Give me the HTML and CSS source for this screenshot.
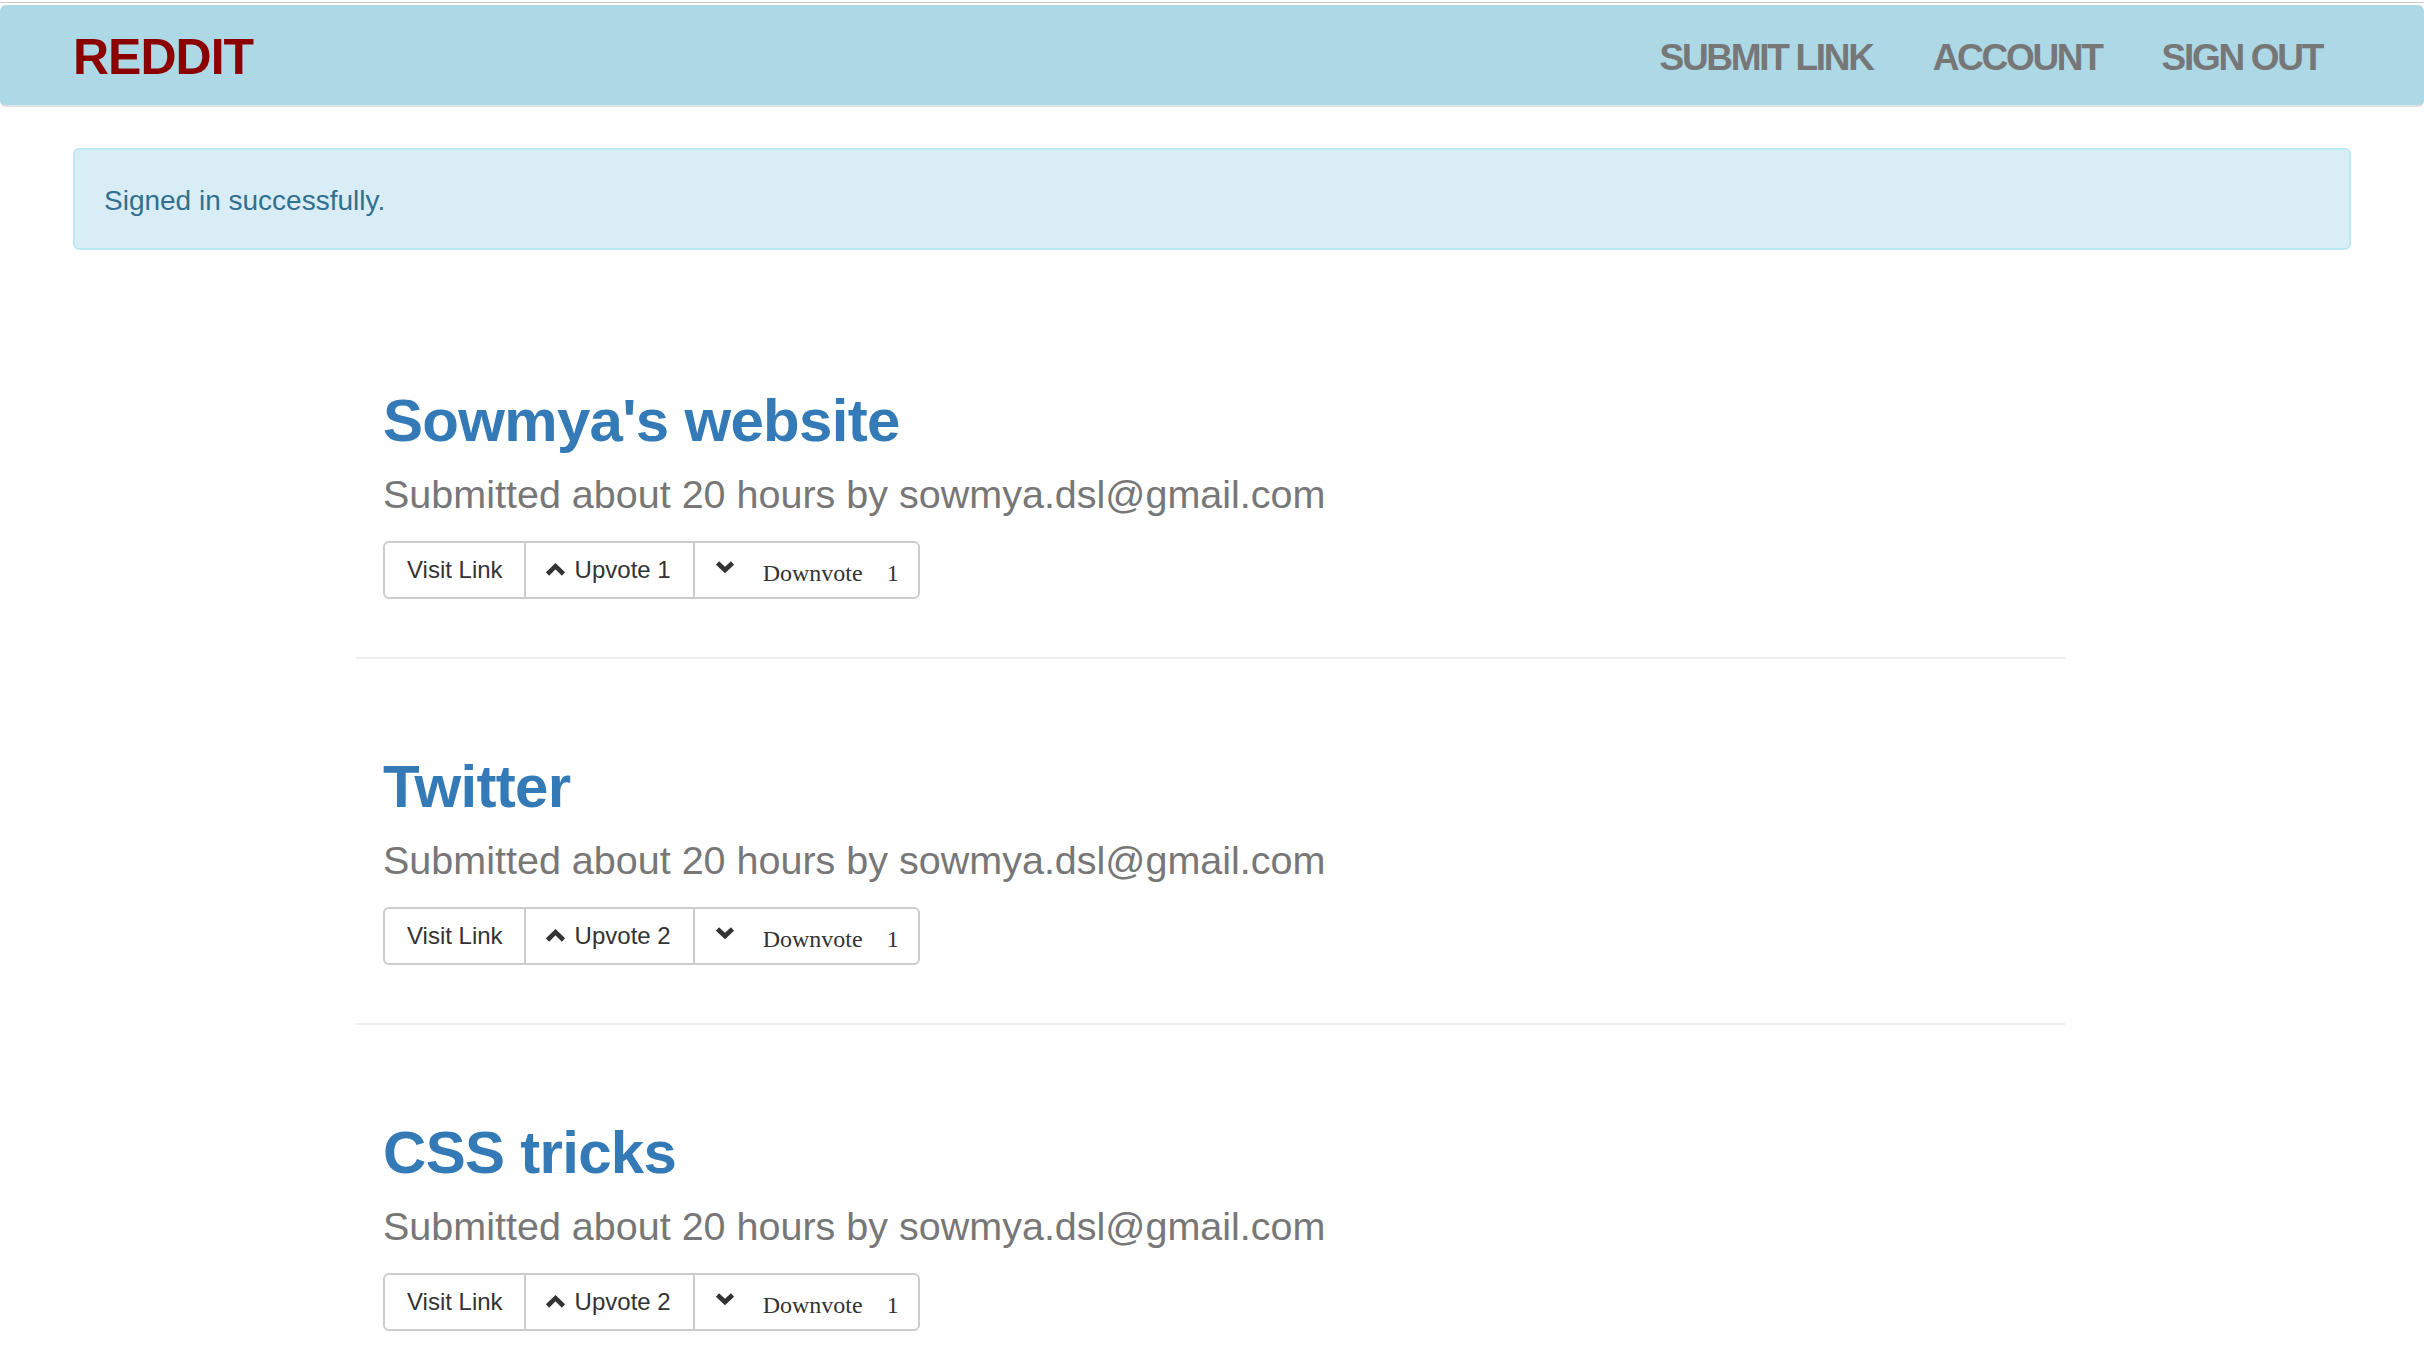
FILE: index.html
```html
<!DOCTYPE html>
<html lang="en">
<head>
<meta charset="utf-8">
<title>Reddit</title>
<link rel="stylesheet" href="styles.css">
</head>
<body>
<header class="topbar">
  <div class="topline"></div>
  <nav class="navbar">
    <a class="brand" href="#">REDDIT</a>
    <ul class="nav-links">
      <li><a href="#">SUBMIT LINK</a></li>
      <li><a href="#">ACCOUNT</a></li>
      <li><a href="#">SIGN OUT</a></li>
    </ul>
  </nav>
</header>

<div class="alert">Signed in successfully.</div>

<main class="links">
  <article class="link">
    <h2 class="link-title"><a href="#">Sowmya's website</a></h2>
    <p class="link-meta">Submitted about 20 hours by sowmya.dsl@gmail.com</p>
    <div class="btn-group">
      <a class="btn btn-visit" href="#">Visit Link</a>
      <a class="btn btn-up" href="#"><svg class="chev chev-up" viewBox="0 0 21 14" width="21" height="14"><polyline points="2.5,12 10.5,4.2 18.5,12"/></svg><span>Upvote 1</span></a>
      <a class="btn btn-down" href="#"><svg class="chev chev-down" viewBox="0 0 20 13" width="20" height="13"><polyline points="2.5,2 10,9 17.5,2"/></svg><span class="down-label">Downvote</span><span class="down-count">1</span></a>
    </div>
  </article>

  <article class="link">
    <h2 class="link-title"><a href="#">Twitter</a></h2>
    <p class="link-meta">Submitted about 20 hours by sowmya.dsl@gmail.com</p>
    <div class="btn-group">
      <a class="btn btn-visit" href="#">Visit Link</a>
      <a class="btn btn-up" href="#"><svg class="chev chev-up" viewBox="0 0 21 14" width="21" height="14"><polyline points="2.5,12 10.5,4.2 18.5,12"/></svg><span>Upvote 2</span></a>
      <a class="btn btn-down" href="#"><svg class="chev chev-down" viewBox="0 0 20 13" width="20" height="13"><polyline points="2.5,2 10,9 17.5,2"/></svg><span class="down-label">Downvote</span><span class="down-count">1</span></a>
    </div>
  </article>

  <article class="link">
    <h2 class="link-title"><a href="#">CSS tricks</a></h2>
    <p class="link-meta">Submitted about 20 hours by sowmya.dsl@gmail.com</p>
    <div class="btn-group">
      <a class="btn btn-visit" href="#">Visit Link</a>
      <a class="btn btn-up" href="#"><svg class="chev chev-up" viewBox="0 0 21 14" width="21" height="14"><polyline points="2.5,12 10.5,4.2 18.5,12"/></svg><span>Upvote 2</span></a>
      <a class="btn btn-down" href="#"><svg class="chev chev-down" viewBox="0 0 20 13" width="20" height="13"><polyline points="2.5,2 10,9 17.5,2"/></svg><span class="down-label">Downvote</span><span class="down-count">1</span></a>
    </div>
  </article>
</main>
</body>
</html>
```

FILE: styles.css
```css
* { box-sizing: border-box; }

html, body {
  margin: 0;
  padding: 0;
  background: #ffffff;
}

body {
  font-family: "Liberation Sans", Arial, Helvetica, sans-serif;
  color: #333333;
}

a { text-decoration: none; }

/* ---------- top navigation ---------- */
.topbar {
  padding-top: 2px;
}

.topline {
  height: 1px;
  background: #c9c9c9;
  margin-bottom: 2px;
}

.navbar {
  display: flex;
  align-items: center;
  justify-content: space-between;
  height: 102px;
  padding: 4px 102px 0 73px;
  background: #add8e6;
  border-bottom: 2px solid #e2e2e2;
  border-radius: 6px;
}

.brand {
  font-size: 50px;
  line-height: 1;
  font-weight: 700;
  letter-spacing: -1px;
  color: #8b0000;
}

.nav-links {
  display: flex;
  gap: 60px;
  list-style: none;
  margin: 0;
  padding: 0;
}

.nav-links a {
  font-size: 37px;
  line-height: 1;
  font-weight: 700;
  letter-spacing: -2.3px;
  color: #777777;
}

/* ---------- flash alert ---------- */
.alert {
  margin: 41px 73px 0;
  padding: 31px 29px 27px;
  font-size: 28px;
  line-height: 40px;
  color: #31708f;
  background: #d9edf7;
  border: 2px solid #bce8f1;
  border-radius: 6px;
}

/* ---------- link list ---------- */
.links {
  width: 1709px;
  margin: 138px 0 0 356px;
}

.link {
  padding: 0 27px 58px;
  margin-bottom: 95px;
  border-bottom: 2px solid #eeeeee;
}

.link:last-child {
  padding-bottom: 0;
  margin-bottom: 0;
  border-bottom: none;
}

.link-title {
  margin: 0;
  font-size: 60px;
  line-height: 66px;
  font-weight: 700;
  letter-spacing: -0.7px;
}

.link-title a {
  color: #337ab7;
}

.link-meta {
  margin: 17px 0 23px;
  font-size: 39.5px;
  line-height: 47px;
  color: #777777;
}

/* ---------- button group ---------- */
.btn-group {
  display: inline-flex;
  border: 2px solid #cccccc;
  border-radius: 6px;
  background: #ffffff;
}

.btn {
  display: flex;
  align-items: center;
  height: 54px;
  font-size: 24px;
  line-height: 54px;
  color: #333333;
}

.btn + .btn {
  border-left: 2px solid #cccccc;
}

.btn-visit {
  padding: 0 21px 0 22px;
}

.btn-up {
  padding: 0 22px 0 19px;
}

.btn-down {
  padding: 0 19px 0 20px;
}

.chev {
  display: block;
  flex: none;
  overflow: visible;
}

.chev polyline {
  fill: none;
  stroke: #333333;
  stroke-width: 4.6;
  stroke-linejoin: miter;
  stroke-linecap: butt;
}

.chev-up {
  margin-right: 9px;
  margin-bottom: 3px;
}

.chev-down {
  margin-right: 28px;
  margin-bottom: 5px;
}

.down-label,
.down-count {
  font-family: "Liberation Serif", "Times New Roman", serif;
  font-size: 24px;
  padding-top: 6px;
}

.down-count {
  margin-left: 24px;
}
```
